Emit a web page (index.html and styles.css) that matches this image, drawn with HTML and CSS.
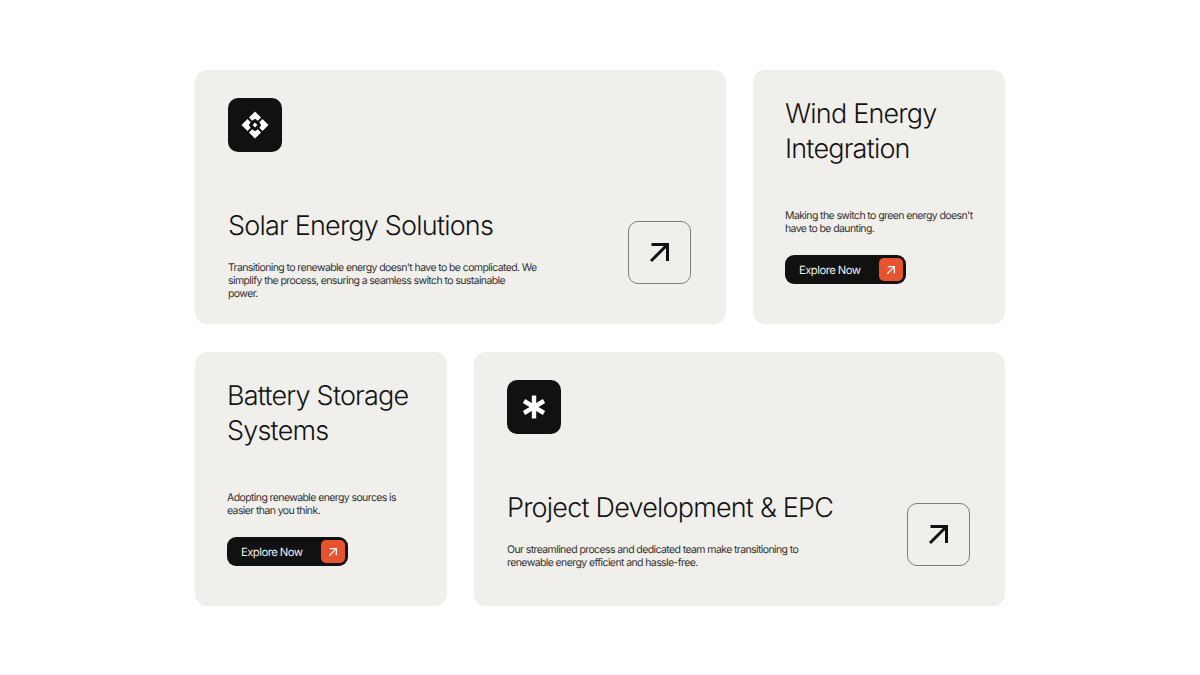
FILE: index.html
```html
<!DOCTYPE html>
<html lang="en">
<head>
    <meta charset="UTF-8">
    <title>Energy Services</title>
    <link rel="stylesheet" href="styles.css">
</head>
<body>
    <div class="container">
        <div class="row">
            <div class="card card-wide">
                <div class="logo">
                    <svg width="28" height="28" viewBox="0 0 28 28" fill="#fff">
                        <path d="M14 0.5 L20 6.5 L16.8 9.7 L14 7.8 L11.2 9.7 L8 6.5 Z"/>
                        <path d="M27.5 14 L21.5 20 L18.3 16.8 L20.2 14 L18.3 11.2 L21.5 8 Z"/>
                        <path d="M14 27.5 L8 21.5 L11.2 18.3 L14 20.2 L16.8 18.3 L20 21.5 Z"/>
                        <path d="M0.5 14 L6.5 8 L9.7 11.2 L7.8 14 L9.7 16.8 L6.5 20 Z"/>
                        <path d="M14 11.6 L16.4 14 L14 16.4 L11.6 14 Z"/>
                    </svg>
                </div>
                <div class="card-bottom">
                    <div class="card-text">
                        <h2>Solar Energy Solutions</h2>
                        <p>Transitioning to renewable energy doesn't have to be complicated. We simplify the process, ensuring a seamless switch to sustainable<br>power.</p>
                    </div>
                    <div class="arrow-box">
                        <svg width="24" height="24" viewBox="0 0 24 24" fill="none" stroke="#111" stroke-width="3">
                            <path d="M3 20 L19.5 3.5"/>
                            <path d="M3.5 3.5 H19.5 V20"/>
                        </svg>
                    </div>
                </div>
            </div>
            <div class="card card-small">
                <h2>Wind Energy Integration</h2>
                <p>Making the switch to green energy doesn't have to be daunting.</p>
                <div class="explore-btn">
                    <span>Explore Now</span>
                    <span class="explore-icon">
                        <svg width="10" height="10" viewBox="0 0 24 24" fill="none" stroke="#fff" stroke-width="3">
                            <path d="M3 21 L20 4"/>
                            <path d="M4 4 H20 V20"/>
                        </svg>
                    </span>
                </div>
            </div>
        </div>
        <div class="row">
            <div class="card card-small">
                <h2>Battery Storage Systems</h2>
                <p>Adopting renewable energy sources is easier than you think.</p>
                <div class="explore-btn">
                    <span>Explore Now</span>
                    <span class="explore-icon">
                        <svg width="10" height="10" viewBox="0 0 24 24" fill="none" stroke="#fff" stroke-width="3">
                            <path d="M3 21 L20 4"/>
                            <path d="M4 4 H20 V20"/>
                        </svg>
                    </span>
                </div>
            </div>
            <div class="card card-wide">
                <div class="logo">
                    <svg width="28" height="28" viewBox="0 0 28 28" fill="none" stroke="#fff" stroke-width="4.4">
                        <path d="M14 2.5 V25.5"/>
                        <path d="M4 8 L24 20"/>
                        <path d="M24 8 L4 20"/>
                    </svg>
                </div>
                <div class="card-bottom">
                    <div class="card-text">
                        <h2>Project Development &amp; EPC</h2>
                        <p>Our streamlined process and dedicated team make transitioning to renewable energy efficient and hassle-free.</p>
                    </div>
                    <div class="arrow-box">
                        <svg width="24" height="24" viewBox="0 0 24 24" fill="none" stroke="#111" stroke-width="3">
                            <path d="M3 20 L19.5 3.5"/>
                            <path d="M3.5 3.5 H19.5 V20"/>
                        </svg>
                    </div>
                </div>
            </div>
        </div>
    </div>
</body>
</html>
```

FILE: styles.css
```css
body {
    font-family: 'Inter', sans-serif;
    margin: 0;
    padding: 0;
    background-color: #ffffff;
    color: #141414;
    text-rendering: geometricPrecision;
}
.container {
    width: 810px;
    margin: 0 auto;
    padding-top: 70px;
    display: flex;
    flex-direction: column;
    gap: 28px;
}
.row {
    display: flex;
    justify-content: space-between;
    height: 254px;
}
.card {
    background-color: #f0efeb;
    border-radius: 12px;
    box-sizing: border-box;
    display: flex;
    flex-direction: column;
}
.card-wide {
    width: 531px;
    padding: 28px 35px 0 33px;
}
.card-small {
    width: 252px;
    padding: 26px 20px 0 32px;
}
.card-small p {
    width: 192px;
}
h2 {
    font-size: 27px;
    font-weight: 300;
    line-height: 35px;
    margin: 0;
    letter-spacing: -0.8px;
}
p {
    font-size: 10.5px;
    line-height: 13px;
    margin: 0;
    color: #333;
    letter-spacing: -0.6px;
}
.logo {
    width: 54px;
    height: 54px;
    background-color: #111;
    border-radius: 10px;
    display: flex;
    align-items: center;
    justify-content: center;
}
.card-bottom {
    margin-top: 56px;
    display: flex;
    justify-content: space-between;
    align-items: flex-start;
}
.card-text {
    width: 330px;
}
.card-text h2 {
    white-space: nowrap;
    margin-bottom: 18px;
}
.card-text p {
    width: 312px;
}
.arrow-box {
    width: 63px;
    height: 63px;
    box-sizing: border-box;
    border: 1px solid #7d7d7a;
    border-radius: 10px;
    display: flex;
    align-items: center;
    justify-content: center;
    margin-top: 13px;
}
.card-small h2 {
    margin-bottom: 43px;
}
.explore-btn {
    margin-top: 20px;
    width: 121px;
    height: 29px;
    box-sizing: border-box;
    padding: 0 3px 0 14px;
    background-color: #111;
    border-radius: 9px;
    color: #eee;
    font-size: 11.3px;
    letter-spacing: -0.55px;
    display: flex;
    align-items: center;
    justify-content: space-between;
}
.explore-icon {
    width: 24px;
    height: 23px;
    background-color: #e8532f;
    border-radius: 5px;
    display: flex;
    align-items: center;
    justify-content: center;
}
```
